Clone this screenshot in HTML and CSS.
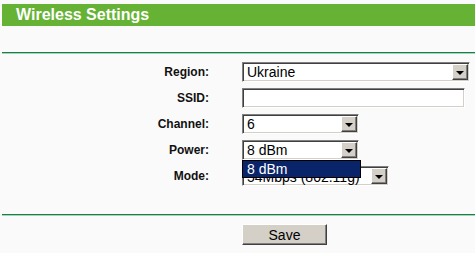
FILE: index.html
```html
<!DOCTYPE html>
<html lang="en">
<head>
    <meta charset="utf-8">
    <title>Wireless Settings</title>
    <link rel="stylesheet" href="styles.css">
</head>
<body>
<div class="panel">
    <div class="title">Wireless Settings</div>
    <div class="rule"></div>
    <div class="form">
        <div class="label">Region:</div>
        <div class="select w-region"><span class="val">Ukraine</span><span class="arrow"></span></div>

        <div class="label">SSID:</div>
        <div class="text w-ssid"></div>

        <div class="label">Channel:</div>
        <div class="select w-short"><span class="val">6</span><span class="arrow"></span></div>

        <div class="label">Power:</div>
        <div class="dropwrap">
            <div class="select w-short"><span class="val">8 dBm</span><span class="arrow"></span></div>
            <ul class="droplist">
                <li class="picked">8 dBm</li>
            </ul>
        </div>

        <div class="label">Mode:</div>
        <div class="select w-mode"><span class="val mode-val">54Mbps (802.11g)</span><span class="arrow"></span></div>
    </div>
    <div class="rule"></div>
    <div class="actions">
        <button type="button" class="btn">Save</button>
    </div>
</div>
</body>
</html>
```

FILE: styles.css
```css
html, body { margin: 0; padding: 0; background: #fafafa; }
body { font-family: "Liberation Sans", Arial, sans-serif; color: #000; }

.panel { padding: 4px 0 0 2px; }

.title {
    height: 22px;
    line-height: 22px;
    background: #66b235;
    color: #fff;
    font-weight: bold;
    font-size: 16px;
    padding-left: 14px;
}

.rule {
    margin-top: 26px;
    border-top: 1px solid #1f7a4c;
    border-bottom: 1px solid #9fd8b4;
}

.form {
    display: grid;
    grid-template-columns: 207px auto;
    column-gap: 33px;
    row-gap: 6px;
    align-items: center;
    padding-top: 8px;
}
.form + .rule { margin-top: 28px; }

.label {
    text-align: right;
    font-weight: bold;
    font-size: 12px;
    color: #111;
}

.select, .text {
    box-sizing: border-box;
    height: 20px;
    background: #fff;
    border-top: 1px solid #808080;
    border-left: 1px solid #808080;
    border-right: 1px solid #fff;
    border-bottom: 1px solid #fff;
    box-shadow: inset 1px 1px 0 #404040, inset -1px -1px 0 #d4d0c8;
    display: flex;
    align-items: center;
    font-size: 14px;
    overflow: hidden;
}
.select .val { flex: 1; padding-left: 4px; white-space: nowrap; overflow: hidden; }
.select .mode-val { padding-top: 2px; }
.select .arrow {
    width: 16px;
    height: 16px;
    margin-right: 1px;
    box-sizing: border-box;
    background: #d4d0c8;
    border-top: 1px solid #fff;
    border-left: 1px solid #fff;
    border-right: 1px solid #404040;
    border-bottom: 1px solid #404040;
    box-shadow: inset -1px -1px 0 #808080;
    display: flex;
    align-items: center;
    justify-content: center;
}
.select .arrow::after {
    content: "";
    border-left: 4px solid transparent;
    border-right: 4px solid transparent;
    border-top: 4px solid #000;
    margin-top: 1px;
}

.w-region { width: 228px; }
.w-ssid { width: 223px; }
.w-short { width: 117px; }
.w-mode { width: 147px; }

.dropwrap { position: relative; }
.droplist {
    position: absolute;
    left: 0;
    top: 20px;
    width: 119px;
    margin: 0;
    padding: 0;
    list-style: none;
    border: 1px solid #000;
    box-sizing: border-box;
    background: #fff;
    z-index: 2;
    font-size: 14px;
}
.droplist li { height: 16px; line-height: 16px; padding-left: 4px; }
.droplist .picked { background: #0a246a; color: #fff; }

.actions { padding: 8px 0 0 240px; }
.btn {
    box-sizing: border-box;
    width: 85px;
    height: 21px;
    padding: 0;
    margin: 0;
    font-family: "Liberation Sans", Arial, sans-serif;
    font-size: 14px;
    color: #000;
    background: #d4d0c8;
    border-top: 1px solid #fff;
    border-left: 1px solid #fff;
    border-right: 1px solid #404040;
    border-bottom: 1px solid #404040;
    box-shadow: inset -1px -1px 0 #808080;
}
```
